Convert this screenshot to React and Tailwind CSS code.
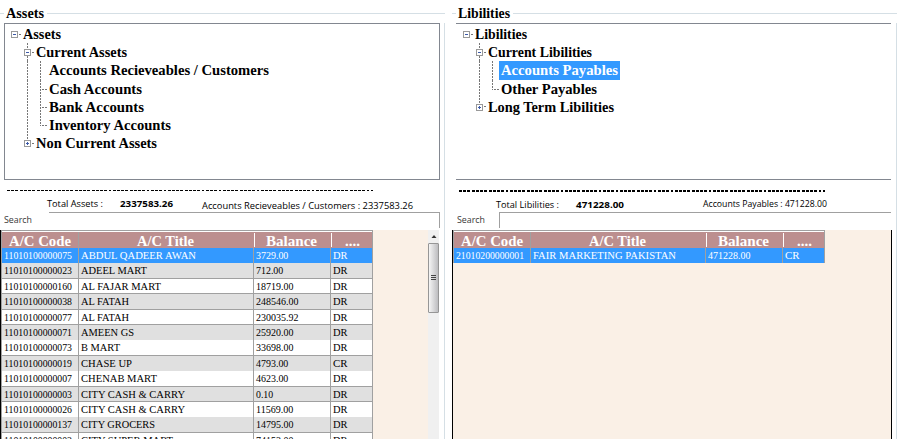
import React from "react";

const rows = [
  ["11010100000075", "ABDUL QADEER AWAN", "3729.00", "DR", "h-[15px]"],
  ["11010100000023", "ADEEL MART", "712.00", "DR", "h-4 border-b"],
  ["11010100000160", "AL FAJAR MART", "18719.00", "DR", "h-[15px] border-b"],
  ["11010100000038", "AL FATAH", "248546.00", "DR", "h-4 border-b"],
  ["11010100000077", "AL FATAH", "230035.92", "DR", "h-[15px] border-b"],
  ["11010100000071", "AMEEN GS", "25920.00", "DR", "h-[15px]"],
  ["11010100000073", "B MART", "33698.00", "DR", "h-4 border-b"],
  ["11010100000019", "CHASE UP", "4793.00", "CR", "h-[15px]"],
  ["11010100000007", "CHENAB MART", "4623.00", "DR", "h-4 border-b"],
  ["11010100000003", "CITY CASH & CARRY", "0.10", "DR", "h-[15px] border-b"],
  ["11010100000026", "CITY CASH & CARRY", "11569.00", "DR", "h-[15px]"],
  ["11010100000137", "CITY GROCERS", "14795.00", "DR", "h-4 border-b"],
  ["11010100000002", "CITY SUPER MART", "74153.00", "DR", "h-4"],
];
const payableRows = [["21010200000001", "FAIR MARKETING PAKISTAN", "471228.00", "CR", "h-[15px]"]];

function T({ w, size, x = 0, y, fill = "#000", bold, sans, children }) {
  return (
    <text x={x} y={y} textLength={w} lengthAdjust="spacingAndGlyphs" fill={fill} fontSize={size}
      fontWeight={bold ? 700 : 400}
      fontFamily={sans ? '"Open Sans", "Noto Sans", sans-serif' : '"Liberation Serif", "Times New Roman", serif'}>
      {children}
    </text>
  );
}

function Label({ w, size = 14, y = 13, className = "", bold, sans, fill, children }) {
  return (
    <svg width={w} height="18" className={"block shrink-0 overflow-visible " + className}>
      <T w={w} size={size} y={y} bold={bold} sans={sans} fill={fill}>{children}</T>
    </svg>
  );
}

function Toggle({ plus }) {
  return (
    <svg width="7" height="7" className="block shrink-0" shapeRendering="crispEdges">
      <rect x="0.5" y="0.5" width="6" height="6" fill="#fff" stroke="#999" />
      <path d="M2 3.5h3" stroke="#3c5aa8" />
      {plus && <path d="M3.5 2v3" stroke="#3c5aa8" />}
    </svg>
  );
}

const VGUIDE = "w-px shrink-0 bg-[repeating-linear-gradient(180deg,#777_0_2px,#fff_2px_3px)]";
const HGUIDE = "h-px shrink-0 bg-[repeating-linear-gradient(90deg,#777_0_2px,#fff_2px_3px)]";

function TreeRow({ level, toggle, label, w, selected, last, first }) {
  return (
    <div className="flex h-[18.2px] items-center">
      {level === 0 && (
        <div className="ml-1.5 flex w-[12px] shrink-0 items-center">
          <Toggle />
          <div className={"ml-px w-[2px] " + HGUIDE} />
        </div>
      )}
      {level === 1 && (
        <div className="ml-[19px] flex h-full w-[12px] shrink-0 items-center">
          <div className="flex h-full w-[7px] flex-col items-center">
            <div className={"h-1.5 " + VGUIDE} />
            <Toggle plus={toggle === "+"} />
            {toggle !== "+" && <div className={"flex-1 " + VGUIDE} />}
          </div>
          <div className={"ml-px w-[2px] " + HGUIDE} />
        </div>
      )}
      {level === 2 && (
        <div className="ml-[22px] flex h-full w-5 shrink-0">
          <div className={"mr-3 h-full " + VGUIDE} />
          <div className={VGUIDE + (last ? " h-[10px]" : " h-full")} />
          {!first && <div className={"ml-px mt-[9px] w-[5px] " + HGUIDE} />}
        </div>
      )}
      <div className={"h-full " + (selected ? "bg-[#3399ff] pl-0.5 pr-0.5" : level === 2 ? "pl-0.5" : level === 0 ? "-ml-[0.5px]" : "")}>
        <Label w={w} bold y={13.7} fill={selected ? "#fff" : "#000"}>{label}</Label>
      </div>
    </div>
  );
}

function Grid({ data }) {
  return (
    <div className="w-[371px] shrink-0 self-start border-r border-[#a0a0a0]">
      <div className="h-[18px] border-t border-[#a0a0a0]">
        <div className="flex h-[17px] border-t border-white bg-[#bc8f8f]">
          <div className="w-[77px] border-r border-[#a0a0a0]"><Label w={62} y={14} bold fill="#fff" className="ml-[7px]">A/C Code</Label></div>
          <div className="w-[175px]"><Label w={57} y={14} bold fill="#fff" className="ml-[58px]">A/C Title</Label></div>
          <div className="my-px w-[77px] border-l border-white"><Label w={51} y={14} bold fill="#fff" className="-mt-px ml-[11px]">Balance</Label></div>
          <div className="my-px w-[41px] border-l border-white"><Label w={15} y={14} bold fill="#fff" className="-mt-px ml-[13px]">....</Label></div>
        </div>
      </div>
      {data.map((r, i) => {
        const fill = i === 0 ? "#fff" : "#000";
        return (
          <div key={i} className={"flex overflow-hidden border-[#a0a0a0] " + r[4] + (i === 0 ? " bg-[#3399ff]" : i % 2 ? " bg-[#e0e0e0]" : " bg-white")}>
            <div className="w-[77px] border-r border-[#a0a0a0] pl-[1.5px]"><Cell w={68} fill={fill}>{r[0]}</Cell></div>
            <div className="w-[175px] border-r border-[#a0a0a0] pl-[2px]"><Cell w={titleWidths[r[1]]} fill={fill}>{r[1]}</Cell></div>
            <div className="w-[77px] border-r border-[#a0a0a0] pl-[2px]"><Cell w={r[2].length * 5.05 - 3} fill={fill}>{r[2]}</Cell></div>
            <div className="w-[41px] pl-[2px]"><Cell w={14.5} fill={fill}>{r[3]}</Cell></div>
          </div>
        );
      })}
    </div>
  );
}

const titleWidths = {
  "ABDUL QADEER AWAN": 115, "ADEEL MART": 66, "AL FAJAR MART": 80, "AL FATAH": 48,
  "AMEEN GS": 53, "B MART": 39, "CHASE UP": 51, "CHENAB MART": 76, "CITY CASH & CARRY": 104,
  "CITY GROCERS": 74, "CITY SUPER MART": 92, "FAIR MARKETING PAKISTAN": 143,
};

function Cell({ w, fill, children }) {
  return <svg width={w} height="15" className="block overflow-visible"><T w={w} size={10.8} y={10.6} fill={fill}>{children}</T></svg>;
}

function Legend({ lead, w, children }) {
  return (
    <div className="flex h-[23px] items-start pt-[13px]">
      <div className={"h-px bg-[#d5dfe5] " + lead} />
      <Label w={w} bold className="-mt-2 ml-0.5">{children}</Label>
      <div className="ml-[3px] h-px flex-1 bg-[#d5dfe5]" />
    </div>
  );
}

function Dashes({ thick }) {
  return (
    <svg width="366" height={thick} className="ml-[7px] mt-[10px] block" shapeRendering="crispEdges">
      <path d={"M0 " + thick / 2 + "H366"} stroke="#000" strokeWidth={thick} strokeDasharray="2.9 1.33" />
    </svg>
  );
}

function Scrollbar() {
  return (
    <div className="ml-auto flex w-[11px] flex-col items-center bg-[#f0f0f0]">
      <svg width="11" height="13" className="block"><path d="M3.5 8L6 5l2.5 3z" fill="#333" /></svg>
      <div className="flex h-[70px] w-[11px] items-center justify-center rounded-[1px] border border-[#969696] bg-gradient-to-r from-[#f5f5f5] to-[#bdbdc0]">
        <svg width="5" height="6" shapeRendering="crispEdges"><path d="M0 .5h5M0 2.5h5M0 4.5h5" stroke="#444" /></svg>
      </div>
    </div>
  );
}

export default function App() {
  return (
    <div className="flex h-[439px] w-[903px] overflow-hidden bg-white">
      <section className="flex w-[445px] flex-col">
        <Legend lead="w-1" w={38}>Assets</Legend>
        <div className="flex flex-1 flex-col border-r border-[#d5dfe5]">
          <div className="ml-1 h-[157px] w-[436px] border border-[#828790] pt-px">
            <TreeRow level={0} label="Assets" w={38} />
            <TreeRow level={1} label="Current Assets" w={91} />
            <TreeRow level={2} label="Accounts Recieveables / Customers" w={220} first />
            <TreeRow level={2} label="Cash Accounts" w={93} />
            <TreeRow level={2} label="Bank Accounts" w={95} />
            <TreeRow level={2} label="Inventory Accounts" w={122} last />
            <TreeRow level={1} toggle="+" label="Non Current Assets" w={121} />
          </div>
          <Dashes thick={1} />
          <div className="flex h-[21px] pt-1">
            <Label w={56} size={9.6} y={12.4} sans className="ml-[47px]">Total Assets :</Label>
            <Label w={53} size={9.6} y={12.4} sans bold className="ml-[17px]">2337583.26</Label>
            <Label w={211} size={9.6} y={11.8} sans className="ml-[29px] mt-0.5">Accounts Recieveables / Customers : 2337583.26</Label>
          </div>
          <div className="flex h-[18px]">
            <Label w={28} size={9} sans className="ml-1 -mt-0.5 opacity-80">Search</Label>
            <div className="ml-[17px] h-4 w-[391px] border-r border-t border-[#a0a0a0]" />
          </div>
          <div className="flex h-[209px] w-[439px] border-l border-black bg-[#faf0e6]">
            <div className="w-px bg-[#a0a0a0]" />
            <Grid data={rows} />
            <Scrollbar />
          </div>
        </div>
      </section>
      <section className="ml-[7px] flex w-[445px] flex-col">
        <Legend lead="w-1" w={52}>Libilities</Legend>
        <div className="flex flex-1 flex-col border-r border-[#d5dfe5]">
          <div className="ml-1 h-[157px] w-[435px] border-y border-[#828790] pl-px pt-px">
            <TreeRow level={0} label="Libilities" w={52} />
            <TreeRow level={1} label="Current Libilities" w={104} />
            <TreeRow level={2} label="Accounts Payables" w={117} selected first />
            <TreeRow level={2} label="Other Payables" w={96} last />
            <TreeRow level={1} toggle="+" label="Long Term Libilities" w={126} />
          </div>
          <Dashes thick={2} />
          <div className="flex h-5 pt-1">
            <Label w={63} size={9.6} y={12.4} sans className="ml-[44px]">Total Libilities :</Label>
            <Label w={48} size={9.6} y={12.4} sans bold className="ml-[17px]">471228.00</Label>
            <Label w={124} size={9.6} y={12.4} sans className="-mt-px ml-[79px]">Accounts Payables : 471228.00</Label>
          </div>
          <div className="flex h-[18px]">
            <Label w={28} size={9} sans className="ml-[5px] -mt-0.5 opacity-80">Search</Label>
            <div className="ml-[14px] h-4 w-[392px] border-l border-t border-[#a0a0a0]" />
          </div>
          <div className="flex h-[209px] w-[440px] border-x border-black bg-[#faf0e6]">
            <div className="h-[33px] w-px bg-[#a0a0a0]" />
            <Grid data={payableRows} />
          </div>
        </div>
      </section>
    </div>
  );
}
